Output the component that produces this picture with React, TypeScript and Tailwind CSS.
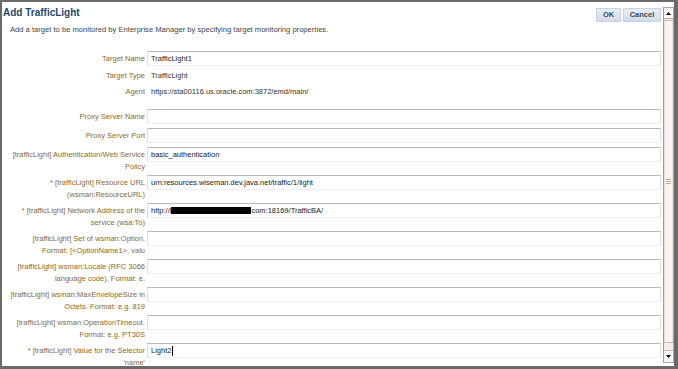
import React from "react";

const labelCls =
  "w-[143px] shrink-0 text-right whitespace-nowrap overflow-hidden text-[7.5px] leading-[11.5px] text-[#8a6a2e]";

function Input({ value, cursor }: { value?: React.ReactNode; cursor?: boolean }) {
  return (
    <div className="ml-[2px] flex h-[15px] flex-1 items-center border border-[#dfdfe7] border-t-[#b7bac4] border-b-[#efedf7] bg-white pl-[3px] text-[7.5px] text-[#222]">
      {value}
      {cursor && <span className="ml-[1px] inline-block h-[10px] w-[1px] bg-black" />}
    </div>
  );
}

function Row2({ l1, l2, value, cursor }: { l1: string; l2: string; value?: React.ReactNode; cursor?: boolean }) {
  return (
    <div className="flex h-[28px] shrink-0 items-start">
      <div className={labelCls + " pt-[2px]"}>
        {l1}
        <br />
        {l2}
      </div>
      <Input value={value} cursor={cursor} />
    </div>
  );
}

function Row1({ label, value }: { label: string; value?: React.ReactNode }) {
  return (
    <div className="flex h-[19px] shrink-0 items-start">
      <div className={labelCls + " pt-[2px]"}>{label}</div>
      <Input value={value} />
    </div>
  );
}

export default function App() {
  return (
    <div className="flex h-[369px] w-[678px] overflow-hidden border-t-2 border-l-2 border-b-[3px] border-r-[4px] border-[#6a6a6a] bg-white font-['Liberation_Sans',Arial,sans-serif]">
      <div className="flex w-[659px] shrink-0 flex-col overflow-hidden">
        <div className="flex shrink-0 items-start justify-between">
          <div className="pl-[1px] pt-[4px] text-[10px] font-bold leading-[14px] text-[#24496b]">
            Add TrafficLight
          </div>
          <div className="mt-[6px] flex gap-[2px]">
            <div className="flex h-[14px] w-[25px] items-center justify-center border border-[#c9d2de] bg-gradient-to-b from-[#e8eef5] to-[#d2dce8] text-[7.5px] font-bold text-[#3a4756]">
              OK
            </div>
            <div className="flex h-[14px] w-[38px] items-center justify-center border border-[#c9d2de] bg-gradient-to-b from-[#e8eef5] to-[#d2dce8] text-[7.5px] font-bold text-[#3a4756]">
              Cancel
            </div>
          </div>
        </div>
        <div className="mt-[2px] shrink-0 pl-[8px] text-[7.6px] leading-[11px] text-[#444]">
          Add a target to be monitored by Enterprise Manager by specifying target monitoring properties.
        </div>
        <div className="mt-[16px] flex flex-col">
          <div className="flex h-[17px] shrink-0 items-start">
            <div className={labelCls + " pt-[2px]"}>Target Name</div>
            <Input value="TrafficLight1" />
          </div>
          <div className="flex h-[16px] shrink-0 items-center">
            <div className={labelCls}>Target Type</div>
            <div className="ml-[2px] pl-[4px] text-[7.5px] text-[#333]">TrafficLight</div>
          </div>
          <div className="flex h-[16px] shrink-0 items-center">
            <div className={labelCls}>Agent</div>
            <div className="ml-[2px] pl-[4px] text-[7.5px] text-[#333]">
              https://sta00116.us.oracle.com:3872/emd/main/
            </div>
          </div>
          <div className="mt-[9px] flex flex-col">
            <Row1 label="Proxy Server Name" />
            <Row1 label="Proxy Server Port" />
            <Row2
              l1="[trafficLight] Authentication/Web Service"
              l2="Policy"
              value="basic_authentication"
            />
            <Row2
              l1="* [trafficLight] Resource URL"
              l2="(wsman:ResourceURL)"
              value="urn:resources.wiseman.dev.java.net/traffic/1/light"
            />
            <Row2
              l1="* [trafficLight] Network Address of the"
              l2="service (wsa:To)"
              value={
                <>
                  <span>http://i</span>
                  <span className="inline-block h-[7px] w-[80px] bg-black" />
                  <span>com:18169/TrafficBA/</span>
                </>
              }
            />
            <Row2 l1="[trafficLight] Set of wsman:Option." l2="Format: [<OptionName1>, valu" />
            <Row2 l1="[trafficLight] wsman:Locale (RFC 3066" l2="language code). Format: e." />
            <Row2 l1="[trafficLight] wsman:MaxEnvelopeSize in" l2="Octets. Format: e.g. 819" />
            <Row2 l1="[trafficLight] wsman:OperationTimeout." l2="Format: e.g. PT30S" />
            <Row2
              l1="* [trafficLight] Value for the Selector"
              l2="'name'"
              value="Light2"
              cursor
            />
          </div>
        </div>
      </div>
      <div className="mb-[3px] ml-[2px] mt-[5px] flex w-[11px] shrink-0 flex-col border border-[#b5a7a2] border-l-[#a89894] bg-[#f6eeeb]">
        <div className="flex h-[11px] shrink-0 items-center justify-center border-b border-[#b5a7a2] bg-[#fbf8f7]">
          <svg width="5" height="3" viewBox="0 0 5 3">
            <path d="M0 3 L2.5 0 L5 3 Z" fill="#000" />
          </svg>
        </div>
        <div className="flex flex-1 flex-col border-b border-[#c9bcb7]">
          <div className="h-[2px] border-b border-[#c9bcb7]" />
          <div className="flex flex-1 items-center justify-center border-x border-x-[#ecdcd6] bg-[#fbf4f2]">
            <div className="flex flex-col gap-[1px]">
              <div className="h-[1px] w-[5px] bg-[#b8aaa5]" />
              <div className="h-[1px] w-[5px] bg-[#b8aaa5]" />
              <div className="h-[1px] w-[5px] bg-[#b8aaa5]" />
            </div>
          </div>
          <div className="h-[8px] border-t border-[#c9bcb7]" />
        </div>
        <div className="flex h-[11px] shrink-0 items-center justify-center bg-[#fbf8f7]">
          <svg width="5" height="3" viewBox="0 0 5 3">
            <path d="M0 0 L5 0 L2.5 3 Z" fill="#000" />
          </svg>
        </div>
      </div>
    </div>
  );
}
